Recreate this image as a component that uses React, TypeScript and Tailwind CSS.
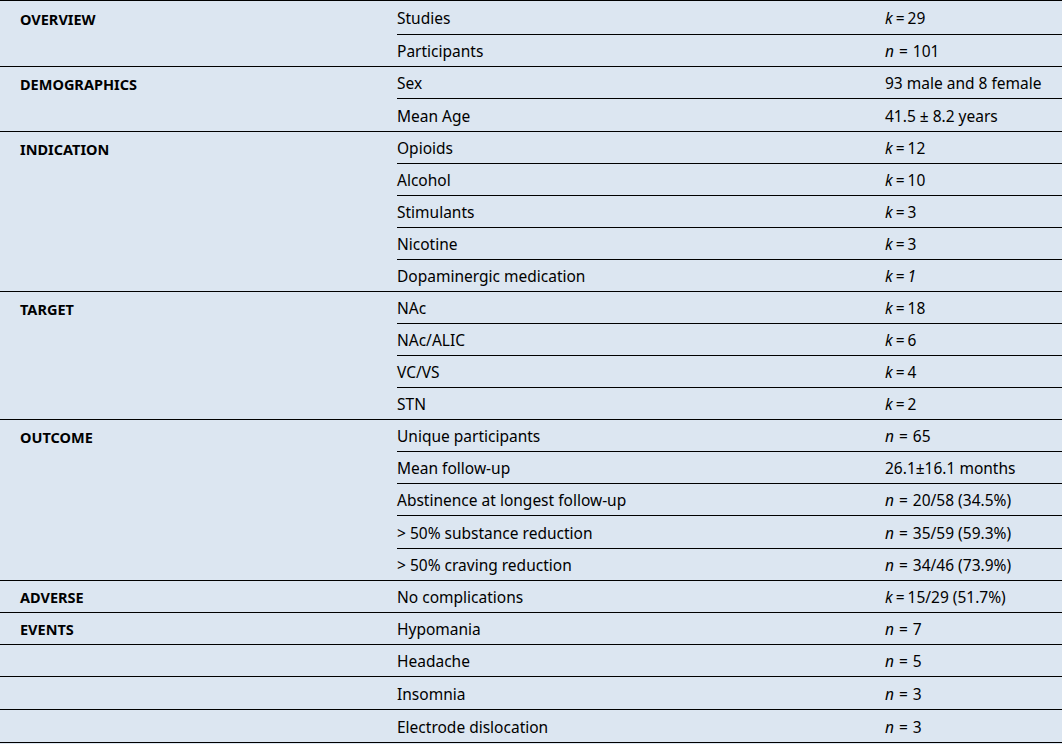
import React from "react";

type Row = { label?: string; a: string; v: React.ReactNode; last?: boolean; h?: string };

const K = ({ children }: { children: React.ReactNode }) => (
  <span>
    <i>k</i>
    <span className="mx-[3px]">=</span>
    {children}
  </span>
);
const N = ({ children }: { children: React.ReactNode }) => (
  <span>
    <i>n</i>
    <span className="mx-[5px]">=</span>
    {children}
  </span>
);

const rows: Row[] = [
  { label: "OVERVIEW", a: "Studies", v: <K>29</K>, h: "h-[34px]" },
  { a: "Participants", v: <N>101</N>, last: true },
  { label: "DEMOGRAPHICS", a: "Sex", v: "93 male and 8 female" },
  { a: "Mean Age", v: "41.5 ± 8.2 years", last: true, h: "h-[33px]" },
  { label: "INDICATION", a: "Opioids", v: <K>12</K> },
  { a: "Alcohol", v: <K>10</K> },
  { a: "Stimulants", v: <K>3</K> },
  { a: "Nicotine", v: <K>3</K> },
  { a: "Dopaminergic medication", v: <K><i>1</i></K>, last: true },
  { label: "TARGET", a: "NAc", v: <K>18</K> },
  { a: "NAc/ALIC", v: <K>6</K> },
  { a: "VC/VS", v: <K>4</K> },
  { a: "STN", v: <K>2</K>, last: true },
  { label: "OUTCOME", a: "Unique participants", v: <N>65</N> },
  { a: "Mean follow-up", v: "26.1±16.1 months" },
  { a: "Abstinence at longest follow-up", v: <N>20/58 (34.5%)</N> },
  { a: "> 50% substance reduction", v: <N>35/59 (59.3%)</N>, h: "h-[33px]" },
  { a: "> 50% craving reduction", v: <N>34/46 (73.9%)</N>, last: true },
  { label: "ADVERSE", a: "No complications", v: <K>15/29 (51.7%)</K>, last: true },
  { label: "EVENTS", a: "Hypomania", v: <N>7</N>, last: true },
  { a: "Headache", v: <N>5</N>, last: true },
  { a: "Insomnia", v: <N>3</N>, last: true, h: "h-[33px]" },
  { a: "Electrode dislocation", v: <N>3</N>, last: true, h: "h-[33px]" },
];

export default function App() {
  return (
    <div
      className="w-[1062px] h-[744px] bg-[#dce6f1] text-black text-[15.5px] overflow-hidden"
      style={{ fontFamily: '"Noto Sans", "Open Sans", sans-serif' }}
    >
      <div className="border-t border-black" />
      {rows.map((r, i) => (
        <div key={i} className={`flex ${r.h ?? "h-[32px]"}`}>
          <div
            className={`w-[397px] shrink-0 pl-[20px] pt-[3px] flex items-center font-bold text-[14.5px] ${
              r.last ? "border-b border-black" : ""
            }`}
          >
            {r.label ?? ""}
          </div>
          <div className="flex-1 flex border-b border-black">
            <div className="w-[488px] shrink-0 pt-[3px] flex items-center">{r.a}</div>
            <div className="flex-1 pt-[3px] flex items-center">{r.v}</div>
          </div>
        </div>
      ))}
    </div>
  );
}
